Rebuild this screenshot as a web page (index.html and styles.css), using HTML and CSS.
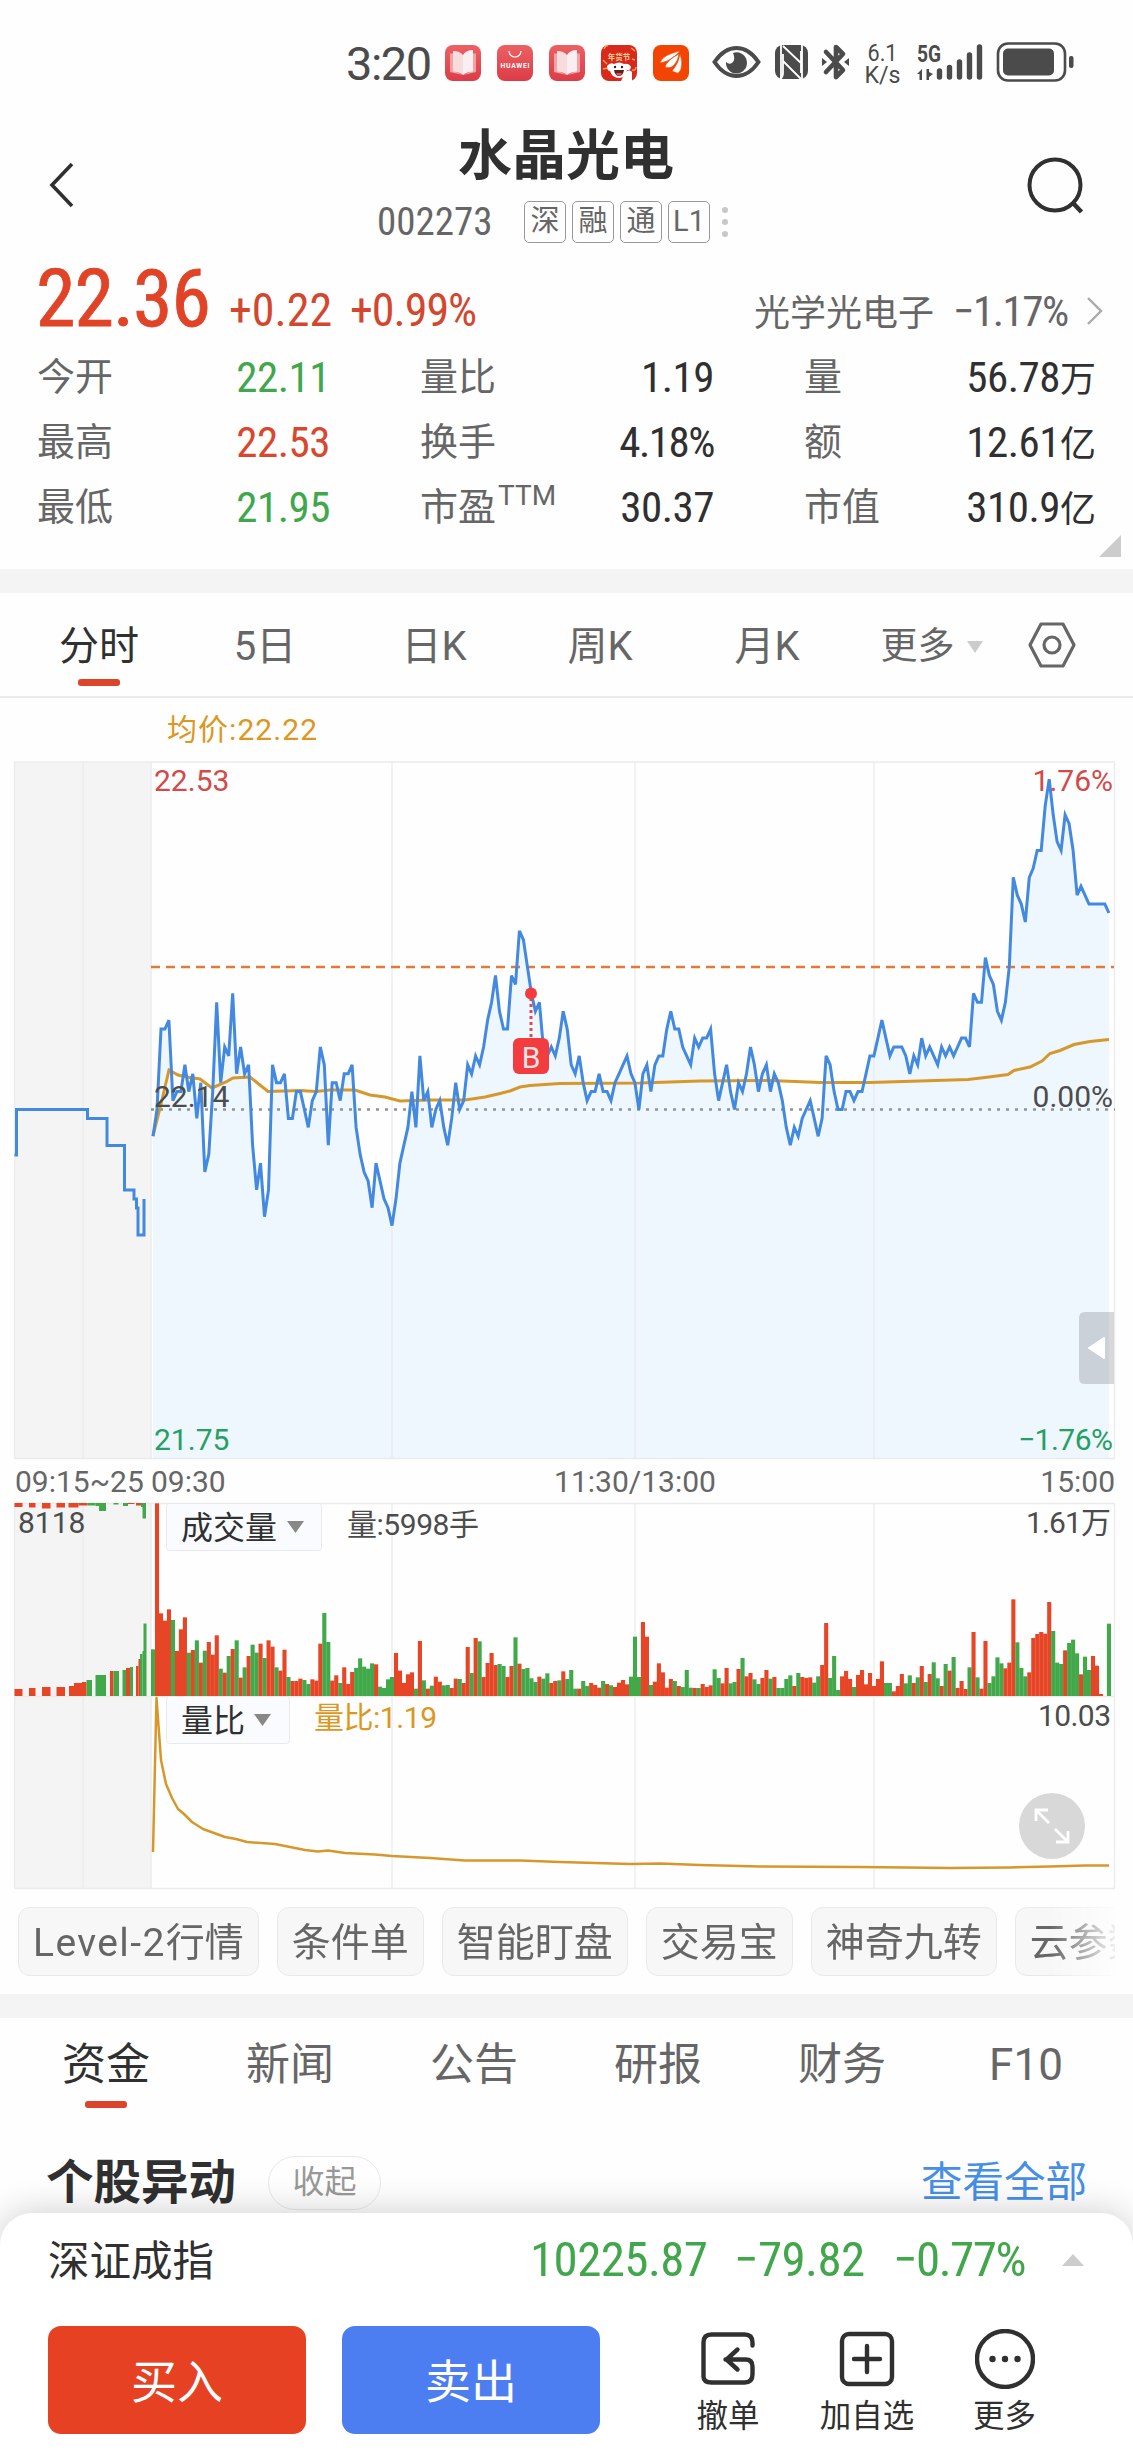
FILE: index.html
```html
<!DOCTYPE html>
<html lang="zh-CN">
<head>
<meta charset="utf-8">
<title>水晶光电 002273</title>
<link rel="stylesheet" href="styles.css">
</head>
<body>
<main class="screen">
  <header class="status">
    <span class="clock">3:20</span>
    <svg class="status-icons" width="690" height="60" viewBox="435 30 690 60">
      <defs>
        <linearGradient id="coral" x1="0" y1="0" x2="0" y2="1"><stop offset="0" stop-color="#ec6163"/><stop offset="1" stop-color="#dc3c46"/></linearGradient>
        <g id="book">
          <rect width="36" height="36" rx="8" fill="url(#coral)"/>
          <path d="M5 8.500h4V26l9 4 9-4V8.500h4V27l-13 3-13-3z" fill="#f2a3a6"/>
          <path d="M8 6q7 0 10 4v20q-3-3-10-3.500z" fill="#f7dcdd"/><path d="M28 5q-7 0-10 5v20q3-3 10-3.500z" fill="#faeff0"/>
        </g>
      </defs>
      <use href="#book" x="445" y="45"/>
      <rect x="497" y="45" width="36" height="36" rx="8" fill="url(#coral)"/>
      <path d="M509 51a6 6 0 0 0 12 0" fill="none" stroke="#fff" stroke-width="1.200"/>
      <text x="515" y="67.500" font-size="6.800" font-weight="700" text-anchor="middle" fill="#fff" textLength="29">HUAWEI</text>
      <use href="#book" x="549" y="45"/>
      <rect x="601" y="45" width="36" height="36" rx="8" fill="#d9281c"/>
      <path d="M603 60l4 4m-4 5l5-1m23-20l4 3m-3 8l3 1m-31-11q2-4 4-3m24 24q4 1 4-3" stroke="#f1a04a" stroke-width="1.500" fill="none"/>
      <text x="619" y="59.500" font-size="7.500" font-weight="700" text-anchor="middle" fill="#f6d293">年货节</text>
      <path d="M607 66q3-4 7-2 5-3 10 0 5-1 7 3-1 4-4 3-1 8-8 8t-9-7q-3 0-3-5z" fill="#fff"/>
      <path d="M624 75q4-7 8-3v9h-11z" fill="#fff"/>
      <circle cx="615" cy="67" r="1.200" fill="#222"/><circle cx="622" cy="67" r="1.200" fill="#222"/>
      <path d="M614 70h10q-1 6-5 6t-5-6z" fill="#5b2320"/><path d="M616 73h6q-1 3-3 3t-3-3z" fill="#e84f50"/>
      <rect x="653" y="45" width="36" height="36" rx="8" fill="#f24402"/>
      <path d="M660 63q2-8 20-12-2 3-8 7-5 4-12 5zM665 67q2-7 14-13-1 7-5 11-3 4-9 2zM672 71q7-8 8-17 3 8 1 15-2 5-4 4z" fill="#fff" stroke="#f24402" stroke-width=".6"/>
      <g fill="#4b4b4b">
        <path d="M714.500 62q9.500-14 22-14t22 14q-9.500 14-22 14t-22-14z" fill="none" stroke="#4b4b4b" stroke-width="4"/>
        <path d="M733 53a10.500 10.500 0 1 1-7 9q3 3 6 1 4-3 1-10z"/>
        <rect x="775" y="45" width="33" height="34" rx="8"/>
        <path d="M781 45v34M802 45v34M783 46l19 18M783 61l18 18M783 54v19q0 4-3 6M801 51v22" stroke="#fff" stroke-width="1.800" fill="none"/>
        <path d="M826 52l17 18-7 7V47l7 7-17 18" fill="none" stroke="#4b4b4b" stroke-width="4.600" stroke-linejoin="round" stroke-linecap="round"/>
        <path d="M822 58l5 4-5 4zM849 58l-5 4 5 4z"/>
        <text x="882.500" y="61" font-size="24.500" text-anchor="middle" textLength="30" lengthAdjust="spacingAndGlyphs">6.1</text>
        <text x="882.500" y="82.500" font-size="24" text-anchor="middle" textLength="36" lengthAdjust="spacingAndGlyphs">K/s</text>
        <text x="917" y="61.500" font-size="24.500" font-weight="700" textLength="24" lengthAdjust="spacingAndGlyphs">5G</text>
        <path d="M922 69v11h-2.500v-6h-2.500zM926.500 69v11h2.500v-3l4-3-4-2v-3z"/>
        <path d="M939.500 71v6M949.500 67.500v9.500M959.500 62v15M969.500 55v22M979.500 47v30" stroke="#4b4b4b" stroke-width="5.400" stroke-linecap="round"/>
        <rect x="998" y="43.500" width="67" height="37" rx="10" fill="none" stroke="#4b4b4b" stroke-width="2.600"/>
        <rect x="1003" y="48.500" width="51" height="27" rx="5"/>
        <rect x="1069" y="56" width="4.500" height="12" rx="2"/>
      </g>
    </svg>
  </header>

  <section class="title-bar">
    <svg class="back" width="40" height="50" viewBox="0 0 40 50"><path d="M29 5L9 26l20 21" fill="none" stroke="#303030" stroke-width="3.600"/></svg>
    <div class="title-block">
      <h1>水晶光电</h1>
      <div class="code-row">
        <span class="num code">002273</span>
        <div class="badges"><span>深</span><span>融</span><span>通</span><span>L1</span></div>
        <div class="dots"><i></i><i></i><i></i></div>
      </div>
    </div>
    <svg class="search" width="60" height="62" viewBox="0 0 60 62"><circle cx="28" cy="30" r="25.500" fill="none" stroke="#303030" stroke-width="4"/><path d="M46 48l8.500 9" stroke="#303030" stroke-width="4.500"/></svg>
  </section>

  <section class="quote">
    <div class="price-row">
      <span class="num price">22.36</span><span class="num delta">+0.22</span><span class="num delta pct">+0.99%</span>
      <span class="sector">光学光电子</span><span class="num sector-pct">−1.17%</span>
      <svg width="18" height="30" viewBox="0 0 18 30"><path d="M2 2l13 13L2 28" fill="none" stroke="#aaa" stroke-width="2.400"/></svg>
    </div>
    <div class="stats">
      <span class="k">今开</span><span class="v num down">22.11</span><span class="k">量比</span><span class="v num">1.19</span><span class="k">量</span><span class="v"><b class="num">56.78</b>万</span>
      <span class="k">最高</span><span class="v num up">22.53</span><span class="k">换手</span><span class="v num pct">4.18%</span><span class="k">额</span><span class="v"><b class="num">12.61</b>亿</span>
      <span class="k">最低</span><span class="v num down">21.95</span><span class="k">市盈<sup>TTM</sup></span><span class="v num">30.37</span><span class="k">市值</span><span class="v"><b class="num">310.9</b>亿</span>
    </div>
    <i class="corner"></i>
  </section>

  <nav class="periods">
    <span class="on">分时</span><span>5日</span><span>日K</span><span>周K</span><span>月K</span>
    <span class="more">更多<i></i></span>
    <svg width="50" height="48" viewBox="0 0 50 48"><path d="M14 3h22l11 21-11 21H14L3 24z" fill="none" stroke="#666" stroke-width="3.200" stroke-linejoin="round"/><circle cx="25" cy="24" r="8" fill="none" stroke="#666" stroke-width="3.200"/></svg>
  </nav>

  <svg class="chart" id="chart" width="1133" height="1192" viewBox="0 698 1133 1192">
    <rect x="14.500" y="762" width="137" height="1126" fill="#f4f4f4"/>
    <rect x="0" y="1459" width="160" height="43.500" fill="#fefefe"/>
    <path id="price-area" fill="#eef6fe"/>
    <g stroke="#eaebed" stroke-width="1.300" fill="none">
      <path d="M14.500 762H1115M14.500 1458.500H1115M14.500 1503.500H1115M14.500 1696.500H1115M14.500 1888.500H1115"/>
      <path d="M14.500 762v696M83 762v696M151 762v696M392 762v696M635 762v696M874 762v696M1114.500 762v696"/>
      <path d="M14.500 1503v385M83 1503v385M151 1503v385M392 1503v385M635 1503v385M874 1503v385M1114.500 1503v385"/>
    </g>
    <path d="M151 967H1114" stroke="#e07b35" stroke-width="2.400" stroke-dasharray="9 6"/>
    <path d="M151 1109.500H1115" stroke="#8f9397" stroke-width="2.500" stroke-dasharray="3 6"/>
    <g class="line">
      <polyline stroke="#4389df" points="14.500,1155 16.500,1155 16.500,1109.500 87.500,1109.500 87.500,1118.500 107,1118.500 107,1145.500 124.500,1145.500 124.500,1190 134,1190 134,1199 136.500,1199 136.500,1208 138,1208 138,1235 144,1235 144,1199"/>
      <polyline stroke="#d6982b" points="153,1136 161,1104 169,1070 178,1075 187,1077 200,1079 212,1088 226,1082 233,1078 250,1077 268,1091.500 300,1090.500 316,1091.500 330,1090 355,1090 370,1095 385,1097 400,1101 430,1100 465,1100 485,1097 498,1094 510,1091 520,1087 530,1085.500 560,1083.500 640,1083 700,1081 770,1080.500 820,1082.500 870,1082.500 920,1081 968,1079.500 985,1077.500 1008,1074.500 1014,1070.500 1030,1067 1042,1061 1050,1053.500 1060,1050.500 1074,1044.500 1090,1041.500 1109,1039.500"/>
      <polyline id="price-line" stroke="#4389df"/>
    </g>
    <path d="M531 998v42" stroke="#df4a50" stroke-width="3" stroke-dasharray="3 3"/>
    <circle cx="531" cy="993.500" r="6" fill="#f23c3f"/>
    <rect x="513" y="1038" width="36" height="36" rx="6" fill="#f23c3f"/>
    <text x="531" y="1067.500" text-anchor="middle" font-size="30" fill="#fde4e4">B</text>
    <g class="axis">
      <text x="167" y="740" fill="#dc9722" textLength="150">均价:22.22</text>
      <text x="154" y="791" fill="#d24a4a">22.53</text>
      <text x="1113" y="791" fill="#d24a4a" text-anchor="end">1.76%</text>
      <text x="154" y="1107">22.14</text>
      <text x="1113" y="1107" text-anchor="end">0.00%</text>
      <text x="154" y="1450" fill="#26a060">21.75</text>
      <text x="1113" y="1450" text-anchor="end" fill="#26a060" textLength="95">−1.76%</text>
      <text x="15" y="1492" fill="#666">09:15~25</text>
      <text x="151" y="1492" fill="#666">09:30</text>
      <text x="635" y="1492" fill="#666" text-anchor="middle">11:30/13:00</text>
      <text x="1115" y="1492" fill="#666" text-anchor="end">15:00</text>
    </g>
    <path d="M1114 1312h-29q-6 0-6 6v60q0 6 6 6h29z" fill="#000" fill-opacity=".15"/>
    <path d="M1104 1338v20l-15-10z" fill="#fff" stroke="#fff" stroke-width="2" stroke-linejoin="round"/>

    <g id="volume"></g>
    <g class="axis">
      <text x="18" y="1533">8118</text>
      <rect class="drop" x="166.500" y="1503.500" width="155" height="47" rx="3"/>
      <text class="pick" x="181" y="1539">成交量</text>
      <path d="M287 1521h17l-8.500 12z" fill="#888"/>
      <text x="347" y="1535" textLength="132">量:5998手</text>
      <text x="1111" y="1533" text-anchor="end" textLength="85">1.61万</text>
    </g>

    <path d="M153 1852L156.500 1698L161 1760L166 1784L172 1798L178 1809L184 1814L192 1822L203 1829L214 1833L225 1837L236 1839L247 1842L275 1844L290 1847L305 1850L318 1851.500L328 1850.500L345 1853L375 1854.500L392 1856L430 1858L465 1860.500L520 1860.500L560 1862L630 1864L660 1863.500L700 1865L760 1866.500L860 1867L950 1868L1010 1867.500L1050 1866.500L1085 1865.500L1109 1865.500" fill="none" stroke="#d6982b" stroke-width="2.500" stroke-linejoin="round"/>
    <g class="axis">
      <rect class="drop" x="166.500" y="1696.500" width="123" height="47" rx="3"/>
      <text class="pick" x="181" y="1732">量比</text>
      <path d="M254 1714h17l-8.500 12z" fill="#888"/>
      <text x="314" y="1728" fill="#dc9722" textLength="123">量比:1.19</text>
      <text x="1111" y="1726" text-anchor="end" textLength="73">10.03</text>
    </g>
    <circle cx="1052" cy="1826" r="33" fill="#d8d8d8"/>
    <path d="M1049 1823l-13-13m0 11v-11h12M1055 1829l13 13m0-11v11h-12" fill="none" stroke="#fff" stroke-width="2.800"/>
  </svg>

  <section class="chips"><span><em>Level-2</em>行情</span><span>条件单</span><span>智能盯盘</span><span>交易宝</span><span>神奇九转</span><span>云参数</span></section>

  <nav class="sections"><span class="on">资金</span><span>新闻</span><span>公告</span><span>研报</span><span>财务</span><span>F10</span></nav>

  <section class="moves"><h2>个股异动</h2><span class="pill">收起</span><a>查看全部</a></section>

  <footer class="sheet">
    <div class="index-row">
      <span class="name">深证成指</span>
      <span class="num i1">10225.87</span><span class="num i2">−79.82</span><span class="num i3">−0.77%</span><i></i>
    </div>
    <div class="actions">
      <button class="buy">买入</button><button class="sell">卖出</button>
      <div class="act"><svg width="60" height="60" viewBox="0 0 60 60"><path d="M54 16v-3q0-8-8-8H13q-8 0-8 8v34q0 6 8 6h33q8 0 8-8V37q0-7-7-7H27M39 20L28 30l11 10" transform="translate(.5 .5)"/></svg><span>撤单</span></div>
      <div class="act"><svg width="60" height="60" viewBox="0 0 60 60"><rect x="5" y="5" width="50" height="50" rx="7"/><path d="M30 17v26M17 30h26"/></svg><span>加自选</span></div>
      <div class="act"><svg width="60" height="60" viewBox="0 0 60 60"><circle cx="30" cy="30" r="28"/><g fill="#303030" stroke="none"><circle cx="17.500" cy="30" r="3.200"/><circle cx="30" cy="30" r="3.200"/><circle cx="42.500" cy="30" r="3.200"/></g></svg><span>更多</span></div>
    </div>
  </footer>
</main>
<script src="chart.js"></script>
</body>
</html>
```
FILE: styles.css
```css
* { box-sizing: border-box; }
body { margin: 0; background: #fff; color: #303030; font-family: Roboto, "Noto Sans CJK SC", sans-serif; }
.screen { width: 1133px; height: 2453px; overflow: hidden; display: flex; flex-direction: column; background: #fefefe; }
.screen > * { flex: none; }
.num { font-family: Roboto, sans-serif; font-stretch: 85%; font-weight: 400; white-space: nowrap; }
.up { color: #d8472e; }
.down { color: #42a74c; }
h1, h2 { margin: 0; }

.status { height: 100px; padding: 30px 0 0 346px; display: flex; }
.clock { flex: none; width: 89px; font-size: 47px; line-height: 67px; letter-spacing: -1.5px; color: #4b4b4b; white-space: nowrap; }
.status-icons { flex: none; }

.title-bar { height: 160px; display: grid; grid-template-columns: 43px 40px 1fr 60px 46px; }
.title-bar .back { grid-column: 2; margin-top: 59px; }
.title-block { padding-left: 294px; }
h1 { margin-left: 81px; font-size: 54px; line-height: 60px; padding-top: 27px; font-weight: 700; }
.code-row { display: flex; align-items: center; height: 42px; margin-top: 14px; }
.code { width: 147px; font-size: 39px; line-height: 42px; color: #666; }
.badges { display: flex; gap: 6px; }
.badges span { width: 42px; height: 42px; border: 1.5px solid #999; border-radius: 5px; font-size: 29px; line-height: 38px; text-align: center; color: #666; }
.dots { margin-left: 12px; display: grid; gap: 6px; }
.dots i { width: 6px; height: 6px; border-radius: 50%; background: #c8c8c8; }
.title-bar .search { margin-top: 55px; }

.quote { height: 333px; border-bottom: 24px solid #f4f4f4; position: relative; }
.price-row { height: 85px; display: flex; align-items: baseline; padding: 0 29px 0 36px; line-height: 78px; }
.price { width: 193px; font-size: 80px; letter-spacing: -1px; color: #e04326; -webkit-text-stroke: .8px; }
.delta { width: 121px; font-size: 46px; color: #d3472f; }
.delta.pct { letter-spacing: -1px; }
.sector { margin-left: auto; width: 199px; font-size: 36px; color: #666; }
.sector-pct { width: 133px; font-size: 43px; letter-spacing: -1.5px; color: #666; }
.stats { display: grid; grid-template-columns: 120px 173px 240px 144px 190px 192px; grid-auto-rows: 65px; padding: 0 37px; line-height: 65px; }
.stats .k { font-size: 38px; color: #666; white-space: nowrap; }
.stats .k:nth-child(6n+3), .stats .k:nth-child(6n+5) { padding-left: 90px; }
.stats .v { font-size: 36px; text-align: right; white-space: nowrap; }
.stats .v.num, .stats b { font-size: 43px; letter-spacing: -.5px; }
.stats .v.pct { letter-spacing: -1.5px; }
.stats sup { margin-left: 2px; font-size: 28px; line-height: 0; vertical-align: 15px; }
.corner { position: absolute; right: 12px; bottom: 12px; border: solid transparent; border-width: 0 0 22px 22px; border-bottom-color: #ccc; }

.periods { height: 105px; border-bottom: 2px solid #ebebeb; display: grid; grid-template-columns: 182px 150px 188px 144px 190px 139px 76px; padding-left: 8px; text-align: center; font-size: 40px; line-height: 107px; color: #666; }
.periods .on, .sections .on { color: #303030; display: flex; flex-direction: column; align-items: center; }
.periods .on::after, .sections .on::after { content: ""; width: 42px; height: 7px; border-radius: 3px; background: #dc452a; margin-top: -21px; }
.more { display: flex; justify-content: center; align-items: center; gap: 12px; font-size: 37px; }
.more i { border: solid transparent; border-width: 12px 8px 0; border-top-color: #ccc; }
.periods svg { margin: 28px 0 0 26px; }

.chart { display: block; margin-bottom: 17px; }
.line polyline { fill: none; stroke-width: 3; stroke-linejoin: miter; }
.axis { font-size: 30px; fill: #4c4c4c; }
.pick { font-size: 32px; fill: #303030; }
.drop { fill: #f9fbff; stroke: #e8e9ec; }

.chips { height: 70px; width: 1115px; padding-left: 18px; display: flex; gap: 18px; overflow: hidden; mask: linear-gradient(90deg, #000 1050px, transparent 1122px); }
.chips span { flex: none; height: 69px; padding: 0 14px; border: 1.5px solid #e9e9e9; border-radius: 12px; background: #f7f7f7; font-size: 39px; line-height: 70px; color: #666; }
.chips em { font-style: normal; letter-spacing: 1.4px; }

.sections { margin-top: 17px; border-top: 24px solid #f4f4f4; height: 139px; padding-left: 14px; display: grid; grid-template-columns: repeat(6, 184px); text-align: center; font-size: 44px; line-height: 94px; color: #666; }
.sections .on::after { margin-top: -11px; }

.moves { height: 80px; padding: 19px 46px 0; display: flex; align-items: center; }
h2 { font-size: 47.5px; line-height: 60px; margin-right: 32px; }
.pill { width: 113px; height: 54px; border: 1.5px solid #e8e8e8; border-radius: 27px; font-size: 32px; line-height: 50px; text-align: center; color: #999; }
.moves a { margin-left: auto; color: #468fe4; font-size: 41.5px; line-height: 56px; }

.sheet { height: 241px; border-radius: 32px 32px 0 0; background: #fff; box-shadow: 0 -2px 34px rgba(0,0,0,.18); z-index: 1; }
.index-row { height: 93px; padding: 0 0 0 48px; display: flex; align-items: center; font-size: 41.5px; }
.index-row .name { width: 482px; margin-top: -3px; }
.index-row .num { font-size: 49px; letter-spacing: -.6px; color: #42a74c; }
.i1 { width: 204px; } .i2 { width: 159px; } .i3 { width: 169px; }
.index-row .i3 { letter-spacing: -1.5px; }
.index-row i { border: solid transparent; border-width: 0 11px 12px; border-bottom-color: #ccc; }
.actions { display: grid; grid-template-columns: 294px 299px 174px 104px 171px; padding: 20px 0 0 48px; }
.actions button { height: 108px; width: 258px; border: 0; border-radius: 13px; color: #fff; font: 46px/104px "Noto Sans CJK SC", sans-serif; padding: 0 0 4px; }
.actions .buy { background: #e64123; }
.actions .sell { background: #4c7ef2; }
.act { display: flex; flex-direction: column; align-items: center; font-size: 31.5px; line-height: 56px; color: #303030; margin-top: 3px; white-space: nowrap; }
.act svg { flex: none; fill: none; stroke: #303030; stroke-width: 4.4; stroke-linecap: round; }
```
FILE: chart.js
```js
const STEP = 3.983, LEFT = 153, BASE = 1109.5, TICK = 8.93;

// minute closes, in cents relative to the previous close of 22.14
const closes = [-3,0,9,9,10,1,2,2,5,2,4,-1,3,-7,-5,2,12,3,7,6,13,4,7,4,5,-4,-9,-6,-12,-9,5,3,3,4,-1,-1,2,2,0,-2,
1,2,7,5,-4,3,3,1,4,4,5,-2,-5,-7,-8,-11,-6,-8,-10,-11,-13,-10,-6,-4,-2,2,-2,6,1,2,-2,0,1,-2,-4,-1,3,0,1,5,
4,6,5,7,10,12,15,11,9,9,15,14,20,19,16,13,11,12,7,6,7,6,8,11,9,5,4,6,3,1,2,2,4,2,2,1,3,4,5,6,
4,3,0,4,5,2,5,6,6,9,11,9,9,7,6,5,8,7,8,8,9,4,1,3,5,2,0,3,2,4,7,5,2,4,5,2,4,3,1,-2,
-4,-2,-3,-1,0,1,-1,-3,-1,6,5,2,0,0,2,2,1,2,2,4,6,6,8,10,8,6,7,7,7,6,4,6,5,8,6,7,6,5,7,6,
7,6,7,8,8,7,13,12,12,17,15,14,11,10,12,16,26,24,23,21,26,27,29,29,34,37,33,30,29,33,32,29,24,25,24,23,23,23,23,23,22];

const points = closes.map((c, i) => [(LEFT + i * STEP).toFixed(1), (BASE - c * TICK).toFixed(1)].join(","));
document.getElementById("price-line").setAttribute("points", points.join(" "));
document.getElementById("price-area").setAttribute("d", "M153,1458 L" + points.join(" L") + " L1108.9,1458 Z");

// per-minute volume: bar height in thirds of a pixel; r = up, g = down
const volumes = "g140 r578 r248 r226 r260 g228 r135 r200 r236 g130 r138 g167 r100 g136 r162 r124 r182 g82 r70 g120 r141 g167 r55 g86 r120 g154 g130 r157 g114 r167 r148 g86 r76 r139 g57 r45 r45 r52 g48 g36 r50 r46 r157 g249 g162 r46 r62 g39 r86 r36 r72 g84 g113 g88 g82 g98 r95 g28 g24 g50 g57 r129 r76 r39 r65 r71 g22 r165 g47 r22 g31 r58 r43 g32 g33 r24 r52 g51 r39 r147 g69 r174 g164 r57 r99 r129 r93 g96 g90 r57 r90 g176 r97 g81 g84 g53 g42 r58 g52 g68 r39 r45 g47 r74 g51 g78 g22 r22 g45 g30 r39 r33 r25 g45 r36 g32 r27 r40 r48 r35 g58 g178 g57 r222 r178 g33 r43 r98 r71 r25 r51 g45 r30 g27 g78 g25 r24 g24 r36 r27 r32 g80 g54 r38 r84 g38 g42 r81 g114 r59 r69 g50 g36 r54 r78 g52 r57 g24 g24 g51 g62 r30 g69 r57 r54 r56 g40 g59 r93 r219 g54 g120 g18 r59 r75 r51 g27 r63 r78 r35 r69 r30 r51 r104 g39 g39 r14 r30 r66 g38 g62 r39 g56 r90 g42 r66 g101 g53 r30 g96 r76 g117 r24 r45 r21 g86 r192 g56 r22 r165 g39 g59 g116 g98 r83 r100 r290 g161 g84 g59 r71 r174 r186 r192 r187 r282 g195 g100 g96 r137 g159 g169 g128 r65 g118 g78 r120 r91 r6 r0 g217".split(" ");
const RED = "#e64526", GREEN = "#42a94a";
const layer = document.getElementById("volume");

function bar(x, y, w, h, color) {
  const r = document.createElementNS("http://www.w3.org/2000/svg", "rect");
  for (const [k, v] of Object.entries({ x, y, width: w, height: h, fill: color })) r.setAttribute(k, v);
  layer.appendChild(r);
}

volumes.forEach((v, i) => {
  const h = v.slice(1) / 3;
  bar(LEFT + i * STEP - 2, 1696 - h, 4.1, h, v[0] === "r" ? RED : GREEN);
});

// opening auction: matched volume from the bottom
[[14.5,8,7,"r"],[29,6.5,8,"r"],[42,8.5,9,"r"],[56.5,8.5,9,"r"],[69,5,10,"r"],[74,8,13,"r"],[82,4.5,14,"r"],[86.5,5.5,16,"g"],
 [95.5,10.5,21,"g"],[110,3.5,25,"r"],[113.5,5.5,25,"g"],[122.5,3.5,26,"g"],[126,4,28,"r"],[130,3,29,"g"],[136,2.5,30,"r"],[138.5,1.5,37,"r"],
 [140,2.5,42,"g"],[142.5,1.5,45,"g"],[143.5,3,72.5,"g"]].forEach(([x, w, h, c]) => bar(x, 1696 - h, w, h, c === "r" ? RED : GREEN));
// unmatched volume from the top
[[14.5,8,4,"r"],[29,6.5,4.5,"r"],[42,8.5,5.5,"r"],[56.5,8.5,4.5,"r"],[68.5,10,4.5,"r"],[78.5,9,2.5,"r"],[87.5,8,2.5,"g"],[95.5,3.5,3,"g"],
 [99,7,8,"g"],[113.5,5,1.5,"g"],[123,5,3,"g"],[127.5,7,1,"r"],[136,5,2.5,"r"],[141,5,4,"g"],[142.5,3.5,15.5,"g"]].forEach(([x, w, h, c]) => bar(x, 1503, w, h, c === "r" ? RED : GREEN));
```
